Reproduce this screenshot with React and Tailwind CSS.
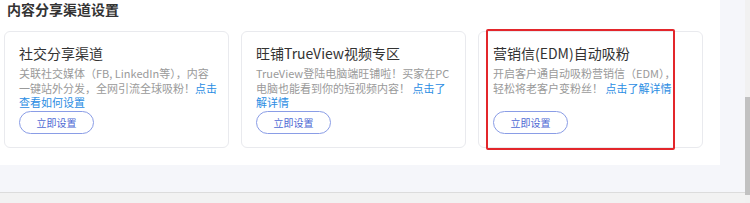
const cards = [
  {
    title: "社交分享渠道",
    lines: ["关联社交媒体（FB, LinkedIn等），内容", "一键站外分发，全网引流全球吸粉！"],
    link: ["点击", "查看如何设置"],
  },
  {
    title: "旺铺TrueView视频专区",
    lines: ["TrueView登陆电脑端旺铺啦！买家在PC", "电脑也能看到你的短视频内容！ "],
    link: ["点击了", "解详情"],
  },
  {
    title: "营销信(EDM)自动吸粉",
    lines: ["开启客户通自动吸粉营销信（EDM），", "轻松将老客户变粉丝！ "],
    link: ["点击了解详情"],
    marked: true,
  },
];

function Card({ card }) {
  return (
    <div className="relative flex h-[117px] w-[225px] flex-col rounded-[6px] border border-[#e9eaee] bg-white pl-[14px] pr-[8px] pt-[12px] pb-[13px]">
      <div className="text-[14px] leading-[18px] text-[#333]">{card.title}</div>
      <div className="mt-[4px] whitespace-nowrap text-[11px] leading-[14.5px] text-[#9a9a9a]">
        {card.lines[0]}
        <br />
        {card.lines[1]}
        <span className="text-[#2b8de3]">{card.link[0]}</span>
        {card.link[1] && (
          <>
            <br />
            <span className="text-[#2b8de3]">{card.link[1]}</span>
          </>
        )}
      </div>
      <button className="mt-auto h-[23px] w-[75px] rounded-full border border-[#8a9de6] text-[10px] text-[#4e69d4]">
        立即设置
      </button>
      {card.marked && (
        <div className="absolute left-[7px] top-[-3px] h-[121px] w-[189px] rounded-[2px] border-2 border-[#e3262b]" />
      )}
    </div>
  );
}

export default function App() {
  return (
    <div
      className="flex h-[203px] w-[750px] bg-[#f5f6fa]"
      style={{ fontFamily: '"Noto Sans CJK SC", "Noto Sans", sans-serif' }}
    >
      <div className="flex flex-1 flex-col">
        <div className="h-[192px]">
          <div className="h-[165px] w-[720px] bg-white pl-[4px]">
            <h1 className="ml-[3px] text-[14px] font-bold leading-[19px] text-[#333]">内容分享渠道设置</h1>
            <div className="mt-[12px] flex gap-[12px]">
              {cards.map((c) => (
                <Card key={c.title} card={c} />
              ))}
            </div>
          </div>
        </div>
        <div className="h-px bg-[#dcdcdc]" />
        <div className="flex-1 bg-[#f2f2f2]" />
      </div>
      <div className="flex w-[5px] flex-col bg-[#f1f1f1]">
        <div className="mt-[97px] h-[98px] bg-[#c1c1c1]" />
      </div>
    </div>
  );
}
